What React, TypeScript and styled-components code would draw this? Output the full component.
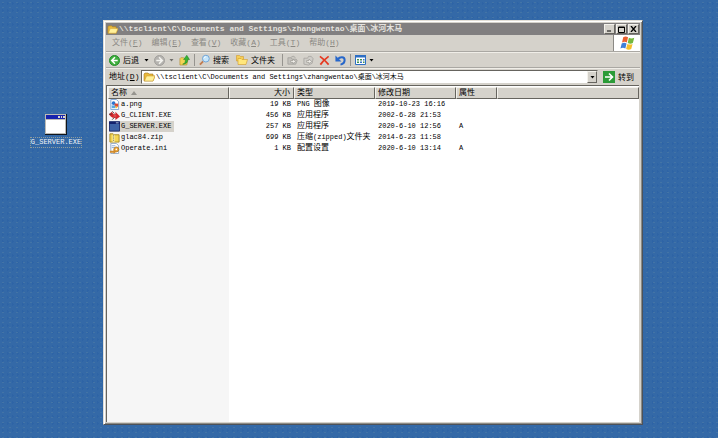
import React from "react";
import styled, { createGlobalStyle, css } from "styled-components";

const Global = createGlobalStyle`
  * { box-sizing: border-box; }
  body {
    margin: 0;
    background: #3168a8;
    font: 7px/12px "Liberation Mono", "Noto Sans CJK SC", monospace;
    color: #000;
  }
  button, input { font: inherit; color: inherit; margin: 0; }
`;

const raised = css`
  border: 1px solid;
  border-color: #f4f2ec #66645e #66645e #f4f2ec;
`;

const Desktop = styled.main`
  min-height: 100vh;
  display: grid;
  grid-template-columns: 103px minmax(0, 1fr);
  padding: 20px 75px 13px 0;
  background-color: #3469a7;
  background-image: radial-gradient(#4374a6 1px, transparent 1px), radial-gradient(#2e64a6 1px, transparent 1px);
  background-size: 7px 5px, 5px 7px;
`;

const Shortcut = styled.button`
  align-self: start;
  justify-self: center;
  display: flex;
  flex-direction: column;
  align-items: center;
  gap: 3px;
  margin: 94px 0 0 9px;
  padding: 0;
  border: 0;
  background: none;
`;

const ShortcutName = styled.span`
  line-height: 9px;
  color: #f0f4f8;
  outline: 1px dotted #8f9c9c;
`;

const Window = styled.section`
  display: flex;
  flex-direction: column;
  padding: 2px;
  background: #d5d2cb;
  border: 1px solid;
  border-color: #e2dfd7 #4d5259 #4d5259 #e2dfd7;
  box-shadow: inset 1px 1px #fff, inset -1px -1px #8d8b85;
`;

const TitleBar = styled.header`
  display: flex;
  align-items: center;
  gap: 1px;
  height: 12px;
  padding: 0 1px;
  background: #817f80;
  color: #e4e2de;
  font-size: 8px;
  font-weight: bold;
`;

const Title = styled.h1`
  flex: 1;
  margin: 0;
  font-size: inherit;
  white-space: nowrap;
`;

const Cjk = styled.span`
  font-family: "Noto Sans CJK SC", sans-serif;
  font-size: 8px;
  line-height: 8px;
`;

const Caption = styled.button`
  ${raised}
  width: 11px;
  height: 10px;
  padding: 0;
  display: grid;
  place-items: center;
  background: #d5d2cb;
`;

const MenuRow = styled.div`
  display: flex;
  height: 17px;
  border-bottom: 1px solid #aaa8a3;
`;

const Menu = styled.nav`
  flex: 1;
  display: flex;
  align-items: center;
  gap: 9px;
  padding-left: 6px;
  border-right: 1px solid #8b8985;
  font-size: 8px;
`;

const MenuItem = styled.button`
  padding: 0;
  border: 0;
  background: none;
  color: #8a8883;
  white-space: nowrap;
`;

const Flag = styled.div`
  width: 26px;
  display: grid;
  place-items: center;
  background: #fff;
`;

const ToolBar = styled.div`
  display: flex;
  align-items: center;
  height: 16px;
  padding-left: 3px;
  border-top: 1px solid #f0eee8;
  border-bottom: 1px solid #aaa8a3;
`;

const Tool = styled.button<{ $after: number }>`
  display: flex;
  align-items: center;
  gap: 3px;
  margin-right: ${(p) => p.$after}px;
  padding: 0;
  border: 0;
  background: none;
  white-space: nowrap;
`;

const Divider = styled.span`
  width: 1px;
  height: 12px;
  margin-right: 4px;
  background: #96948f;
`;

const AddressBar = styled.div`
  display: flex;
  align-items: center;
  height: 17px;
  padding-left: 3px;
  border-top: 1px solid #f0eee8;
`;

const AddressLabel = styled.label`
  width: 32px;
  font-size: 8px;
  white-space: nowrap;
`;

const AddressBox = styled.div`
  flex: 1;
  display: flex;
  align-items: center;
  gap: 1px;
  height: 14px;
  padding-left: 1px;
  background: #fff;
  border: 1px solid;
  border-color: #66645e #d5d2cb #d5d2cb #66645e;
`;

const AddressInput = styled.input`
  flex: 1;
  min-width: 0;
  height: 12px;
  padding: 0;
  border: 0;
  outline: 0;
  background: none;
`;

const DropButton = styled.button`
  ${raised}
  width: 10px;
  height: 12px;
  padding: 0;
  display: grid;
  place-items: center;
  background: #d5d2cb;
`;

const Go = styled.button`
  display: flex;
  align-items: center;
  gap: 3px;
  width: 42px;
  padding: 0 0 0 5px;
  border: 0;
  background: none;
  white-space: nowrap;
`;

const FileArea = styled.div`
  flex: 1;
  padding: 1px 0 0 1px;
  border-top: 1px solid #66645e;
  border-left: 1px solid #66645e;
  margin-right: 1px;
  background: linear-gradient(90deg, #f6f6f6 122px, #fff 122px);
`;

const Table = styled.table`
  width: 100%;
  table-layout: fixed;
  border-collapse: separate;
  border-spacing: 0;
`;

const Head = styled.th<{ $right?: boolean }>`
  height: 12px;
  padding: 0 3px 0 2px;
  line-height: 10px;
  font-weight: normal;
  text-align: ${(p) => (p.$right ? "right" : "left")};
  white-space: nowrap;
  background: #d5d2cb;
  border: 1px solid;
  border-color: #f4f2ec #66645e #66645e #f4f2ec;
`;

const Cell = styled.td<{ $right?: boolean }>`
  height: 11px;
  padding: 0 3px;
  line-height: 11px;
  text-align: ${(p) => (p.$right ? "right" : "left")};
  white-space: nowrap;
`;

const NameCell = styled(Cell)`
  padding: 0 0 0 1px;
`;

const FileName = styled.span<{ $selected?: boolean }>`
  display: flex;
  width: fit-content;
  align-items: center;
  gap: 1px;
  padding-right: 3px;
  background: ${(p) => (p.$selected ? "#d5d2cb" : "none")};
`;

const Folder = ({ size = 11 }: { size?: number }) => (
  <svg width={size} height={size} viewBox="0 0 12 12" aria-hidden="true">
    <path d="M1 10V3l1-1h3l1 1h4v2h2l-2 5z" fill="#e9b93c" stroke="#a87b1c" strokeWidth=".6" />
    <path d="M1.500 10 3.500 5H12l-2 5z" fill="#fff09a" stroke="#c9982b" strokeWidth=".5" />
  </svg>
);

const Down = ({ color = "#000" }: { color?: string }) => (
  <svg width="5" height="3" viewBox="0 0 5 3" aria-hidden="true"><path d="M.5 0h4l-2 2.500z" fill={color} /></svg>
);

const BackIcon = () => (
  <svg width="11" height="11" viewBox="0 0 12 12" aria-hidden="true">
    <circle cx="6" cy="6" r="5.500" fill="#3fae3c" stroke="#1f8a26" />
    <path d="M6.500 2.500 3 6l3.500 3.500M3.500 6H9.500" fill="none" stroke="#fff" strokeWidth="1.700" />
  </svg>
);

const ForwardIcon = () => (
  <svg width="11" height="11" viewBox="0 0 12 12" aria-hidden="true">
    <circle cx="6" cy="6" r="5.500" fill="#b5b3af" stroke="#a09e9a" />
    <path d="M5.500 2.500 9 6 5.500 9.500M8.500 6h-6" fill="none" stroke="#f4f3ef" strokeWidth="1.700" />
  </svg>
);

const UpIcon = () => (
  <svg width="11" height="12" viewBox="0 0 12 12" aria-hidden="true">
    <path d="M1 4.500 2 3.500h3l1 1h4l-1.500 7H1z" fill="#f3d255" stroke="#ad8423" strokeWidth=".6" />
    <path d="M4 10.500c2.500-.5 3-2.500 3-5H5L8.500.8l3 4.700h-2c0 3-1.500 5.500-5.500 5z" fill="#35b335" stroke="#167e1d" strokeWidth=".5" />
  </svg>
);

const SearchIcon = () => (
  <svg width="11" height="12" viewBox="0 0 12 12" aria-hidden="true">
    <path d="m4.500 7.500-3.500 3.500" stroke="#c07a4e" strokeWidth="2" />
    <circle cx="7.500" cy="4.500" r="3.700" fill="#c6e6fb" stroke="#6aa0d4" />
    <path d="M5.500 4a2 2 0 0 1 2-1.500" stroke="#fff" fill="none" />
  </svg>
);

const FoldersIcon = () => (
  <svg width="12" height="12" viewBox="0 0 12 12" aria-hidden="true">
    <path d="M.5 1.500h3l1 1h3v4.500h-7z" fill="#f6cf58" stroke="#d29b2c" strokeWidth=".6" />
    <path d="M2 10.500V4.500h3l1 1h5.500L10 10.500z" fill="#ffe77c" stroke="#d29b2c" strokeWidth=".6" />
  </svg>
);

const MoveIcon = ({ copy }: { copy?: boolean }) => (
  <svg width="11" height="11" viewBox="0 0 12 12" aria-hidden="true">
    {copy ? (
      <path d="M1 3.500h4l1-2h3l2 2.500-1 5-4 2-5-1z" fill="#cfcdc8" stroke="#a3a19c" strokeWidth=".8" />
    ) : (
      <path d="M1 10V3h3.500l1 1.500H10l1 1.500-1.500 4zM4.500 2.500c1.500-1.500 3.500-1.500 4.500.5" fill="#c4c2bd" stroke="#a3a19c" strokeWidth=".9" />
    )}
    <path d="M4 6h2.500V4.500L9.500 7l-3 2.500V8H4z" fill="#f1efea" stroke="#96948f" strokeWidth=".7" />
  </svg>
);

const DeleteIcon = () => (
  <svg width="11" height="11" viewBox="0 0 12 12" aria-hidden="true">
    <path d="M1 1.500c3 2 6 5 9.500 9M10.500 1.500C7 4 4 7 1.500 10.500" fill="none" stroke="#e6381f" strokeWidth="1.900" />
  </svg>
);

const UndoIcon = () => (
  <svg width="11" height="11" viewBox="0 0 12 12" aria-hidden="true">
    <path d="M3 4.500C5.500 1.500 10.500 1.500 10.500 5.500c0 2.500-2 4.500-4.500 5" fill="none" stroke="#2767ca" strokeWidth="2.200" />
    <path d="M.5.5v6.500h6.500z" fill="#2767ca" />
  </svg>
);

const ViewsIcon = () => (
  <svg width="11" height="10" viewBox="0 0 11 10" aria-hidden="true">
    <path d="M.5.5h10v9H.5z" fill="#fff" stroke="#2d6fc4" />
    <path d="M0 0h11v2.500H0z" fill="#2d6fc4" />
    <path d="M2 4h2v1.500H2zm3 0h2v1.500H5zM2 6.500h2V8H2zm6 0h1.500V8H8z" fill="#3d9154" />
    <path d="M8 4h1.500v1.500H8zM5 6.500h2V8H5z" fill="#3671c8" />
  </svg>
);

const GoIcon = () => (
  <svg width="12" height="12" viewBox="0 0 12 12" aria-hidden="true">
    <path d="M0 0h12v12H0z" fill="#2b9b37" />
    <path d="M6 2.500 9.500 6 6 9.500M9 6H2" fill="none" stroke="#fff" strokeWidth="1.600" />
  </svg>
);

const FlagIcon = () => (
  <svg width="15" height="14" viewBox="0 0 14 13" aria-hidden="true">
    <path d="M3 1.200C4.500.2 6 .2 7.500 1.200L6.400 6C5 5 3.500 5 1.900 6z" fill="#ec6131" />
    <path d="M8.300 1.700c1.700.8 3.200.8 5 0L12 6.500c-1.500.8-3.200.8-4.800 0z" fill="#74b83c" />
    <path d="M1.600 7c1.500-1 3-1 4.500 0L5 11.700c-1.500-1-3-1-4.600 0z" fill="#3e7fd8" />
    <path d="M6.900 7.400c1.600.8 3.200.8 4.800 0l-1.200 4.800c-1.600.8-3.200.8-4.800 0z" fill="#f4be2c" />
  </svg>
);

const FileIcon = ({ kind }: { kind: string }) => (
  <svg width="11" height="11" viewBox="0 0 12 12" aria-hidden="true">
    {kind === "png" && (
      <>
        <path d="M2 .5h6l2.500 2.500v8.500H2z" fill="#fff" stroke="#7ba2d2" />
        <circle cx="5" cy="4.500" r="2" fill="#2c75d0" />
        <path d="M6 5h4v3.500H6z" fill="#e2482e" />
        <path d="M3 7h4v3H3z" fill="#56a8e2" />
        <path d="M7 8h2v2H7z" fill="#efc237" />
      </>
    )}
    {kind === "client" && (
      <>
        <path d="M0 5 3 2l2 2.500h2V2l5 5-5 4V8.500H4L2 7z" fill="#d3262a" />
        <path d="M3.500 1.500 6 4M3.500 10.500 6 8M0 4.500h3" stroke="#4c3432" strokeWidth="1" />
        <path d="M5 6.500h3" stroke="#f1b3ae" strokeWidth=".6" />
      </>
    )}
    {kind === "server" && (
      <>
        <path d="M.5 1h11v10H.5z" fill="#3e62a6" stroke="#1b2a6a" />
        <path d="M0 .5h12v2.800H0z" fill="#14226e" />
        <path d="M7.500 2h3" stroke="#b9c8e2" />
      </>
    )}
    {kind === "zip" && (
      <>
        <path d="M1 2h3.500l1 1H11v8H1z" fill="#f5d755" stroke="#a78a20" />
        <path d="M5 3v8" stroke="#fff8c5" strokeWidth="2" />
        <path d="M5 3v8" stroke="#6a6230" strokeDasharray="1 1" />
      </>
    )}
    {kind === "ini" && (
      <>
        <path d="M2 .5h6l2.500 2.500v8.500H2z" fill="#fff" stroke="#8fa6c4" />
        <path d="M3 3h4M3 5h3" stroke="#86a7d2" />
        <circle cx="8" cy="7" r="2.700" fill="#eda435" stroke="#a86f1c" strokeWidth=".8" />
        <circle cx="8" cy="7" r=".9" fill="#fff" />
        <path d="M1 8.500h4V7l3 2.500L5 12v-1.500H1z" fill="#d18b2b" />
      </>
    )}
  </svg>
);

const menus = [["文件", "F"], ["编辑", "E"], ["查看", "V"], ["收藏", "A"], ["工具", "T"], ["帮助", "H"]];

const files = [
  { icon: "png", name: "a.png", size: "19", type: <>PNG <Cjk>图像</Cjk></>, date: "2019-10-23 16:16", attr: "" },
  { icon: "client", name: "G_CLIENT.EXE", size: "456", type: <Cjk>应用程序</Cjk>, date: "2002-6-28 21:53", attr: "" },
  { icon: "server", name: "G_SERVER.EXE", size: "257", type: <Cjk>应用程序</Cjk>, date: "2020-6-10 12:56", attr: "A", selected: true },
  { icon: "zip", name: "glac84.zip", size: "699", type: <><Cjk>压缩</Cjk>(zipped)<Cjk>文件夹</Cjk></>, date: "2014-6-23 11:58", attr: "" },
  { icon: "ini", name: "Operate.ini", size: "1", type: <Cjk>配置设置</Cjk>, date: "2020-6-10 13:14", attr: "A" },
];

const path = "\\\\tsclient\\C\\Documents and Settings\\zhangwentao\\桌面\\冰河木马";

export default function App() {
  return (
    <>
      <Global />
      <Desktop>
        <Shortcut>
          <svg width="22" height="21" viewBox="0 0 22 21" aria-hidden="true">
            <path d="M0 0h22v21H0z" fill="#10151c" />
            <path d="M0 0h21v20H0z" fill="#bdbbb5" />
            <path d="M1 1h19v4H1z" fill="#1824ae" />
            <path d="M13 2h2v2h-2zm3 0h1v2h-1zm2 0h2v2h-2z" fill="#d8d6d0" />
            <path d="M1 6h19v13H1z" fill="#fff" />
          </svg>
          <ShortcutName>G_SERVER.EXE</ShortcutName>
        </Shortcut>
        <Window>
          <TitleBar>
            <Folder />
            <Title>{path}</Title>
            <Caption aria-label="Minimize"><svg width="7" height="6"><path d="M1 5h4" stroke="#000" /></svg></Caption>
            <Caption aria-label="Maximize"><svg width="7" height="7"><path d="M.5 1h6v5.500h-6zM.5 1.500h6" fill="none" stroke="#000" /></svg></Caption>
            <Caption aria-label="Close"><svg width="7" height="6"><path d="m1 0 5 6M6 0 1 6" stroke="#000" strokeWidth="1.300" /></svg></Caption>
          </TitleBar>
          <MenuRow>
            <Menu>
              {menus.map(([label, key]) => (
                <MenuItem key={key}><Cjk>{label}</Cjk>(<u>{key}</u>)</MenuItem>
              ))}
            </Menu>
            <Flag><FlagIcon /></Flag>
          </MenuRow>
          <ToolBar>
            <Tool $after={5}><BackIcon /><Cjk>后退</Cjk></Tool>
            <Tool $after={5} aria-label="Back history"><Down /></Tool>
            <Tool $after={4} aria-label="Forward"><ForwardIcon /></Tool>
            <Tool $after={5} aria-label="Forward history"><Down color="#6f6d69" /></Tool>
            <Tool $after={4} aria-label="Up"><UpIcon /></Tool>
            <Divider />
            <Tool $after={7}><SearchIcon /><Cjk>搜索</Cjk></Tool>
            <Tool $after={7}><FoldersIcon /><Cjk>文件夹</Cjk></Tool>
            <Divider />
            <Tool $after={5} aria-label="Move to"><MoveIcon /></Tool>
            <Tool $after={5} aria-label="Copy to"><MoveIcon copy /></Tool>
            <Tool $after={5} aria-label="Delete"><DeleteIcon /></Tool>
            <Tool $after={4} aria-label="Undo"><UndoIcon /></Tool>
            <Divider />
            <Tool $after={0} aria-label="Views"><ViewsIcon /><Down /></Tool>
          </ToolBar>
          <AddressBar>
            <AddressLabel htmlFor="address"><Cjk>地址</Cjk>(<u>D</u>)</AddressLabel>
            <AddressBox>
              <Folder size={12} />
              <AddressInput id="address" defaultValue={path} />
              <DropButton aria-label="Show addresses"><Down /></DropButton>
            </AddressBox>
            <Go><GoIcon /><Cjk>转到</Cjk></Go>
          </AddressBar>
          <FileArea>
            <Table>
              <colgroup>
                <col width="121" /><col width="65" /><col width="81" /><col width="81" /><col width="41" /><col />
              </colgroup>
              <thead>
                <tr>
                  <Head><Cjk>名称</Cjk> <svg width="6" height="4"><path d="M0 4 3 0l3 4z" fill="#96948f" /></svg></Head>
                  <Head $right><Cjk>大小</Cjk></Head>
                  <Head><Cjk>类型</Cjk></Head>
                  <Head><Cjk>修改日期</Cjk></Head>
                  <Head><Cjk>属性</Cjk></Head>
                  <Head />
                </tr>
              </thead>
              <tbody>
                {files.map((f) => (
                  <tr key={f.name}>
                    <NameCell><FileName $selected={f.selected}><FileIcon kind={f.icon} />{f.name}</FileName></NameCell>
                    <Cell $right>{f.size} KB</Cell>
                    <Cell>{f.type}</Cell>
                    <Cell>{f.date}</Cell>
                    <Cell>{f.attr}</Cell>
                    <Cell />
                  </tr>
                ))}
              </tbody>
            </Table>
          </FileArea>
        </Window>
      </Desktop>
    </>
  );
}
